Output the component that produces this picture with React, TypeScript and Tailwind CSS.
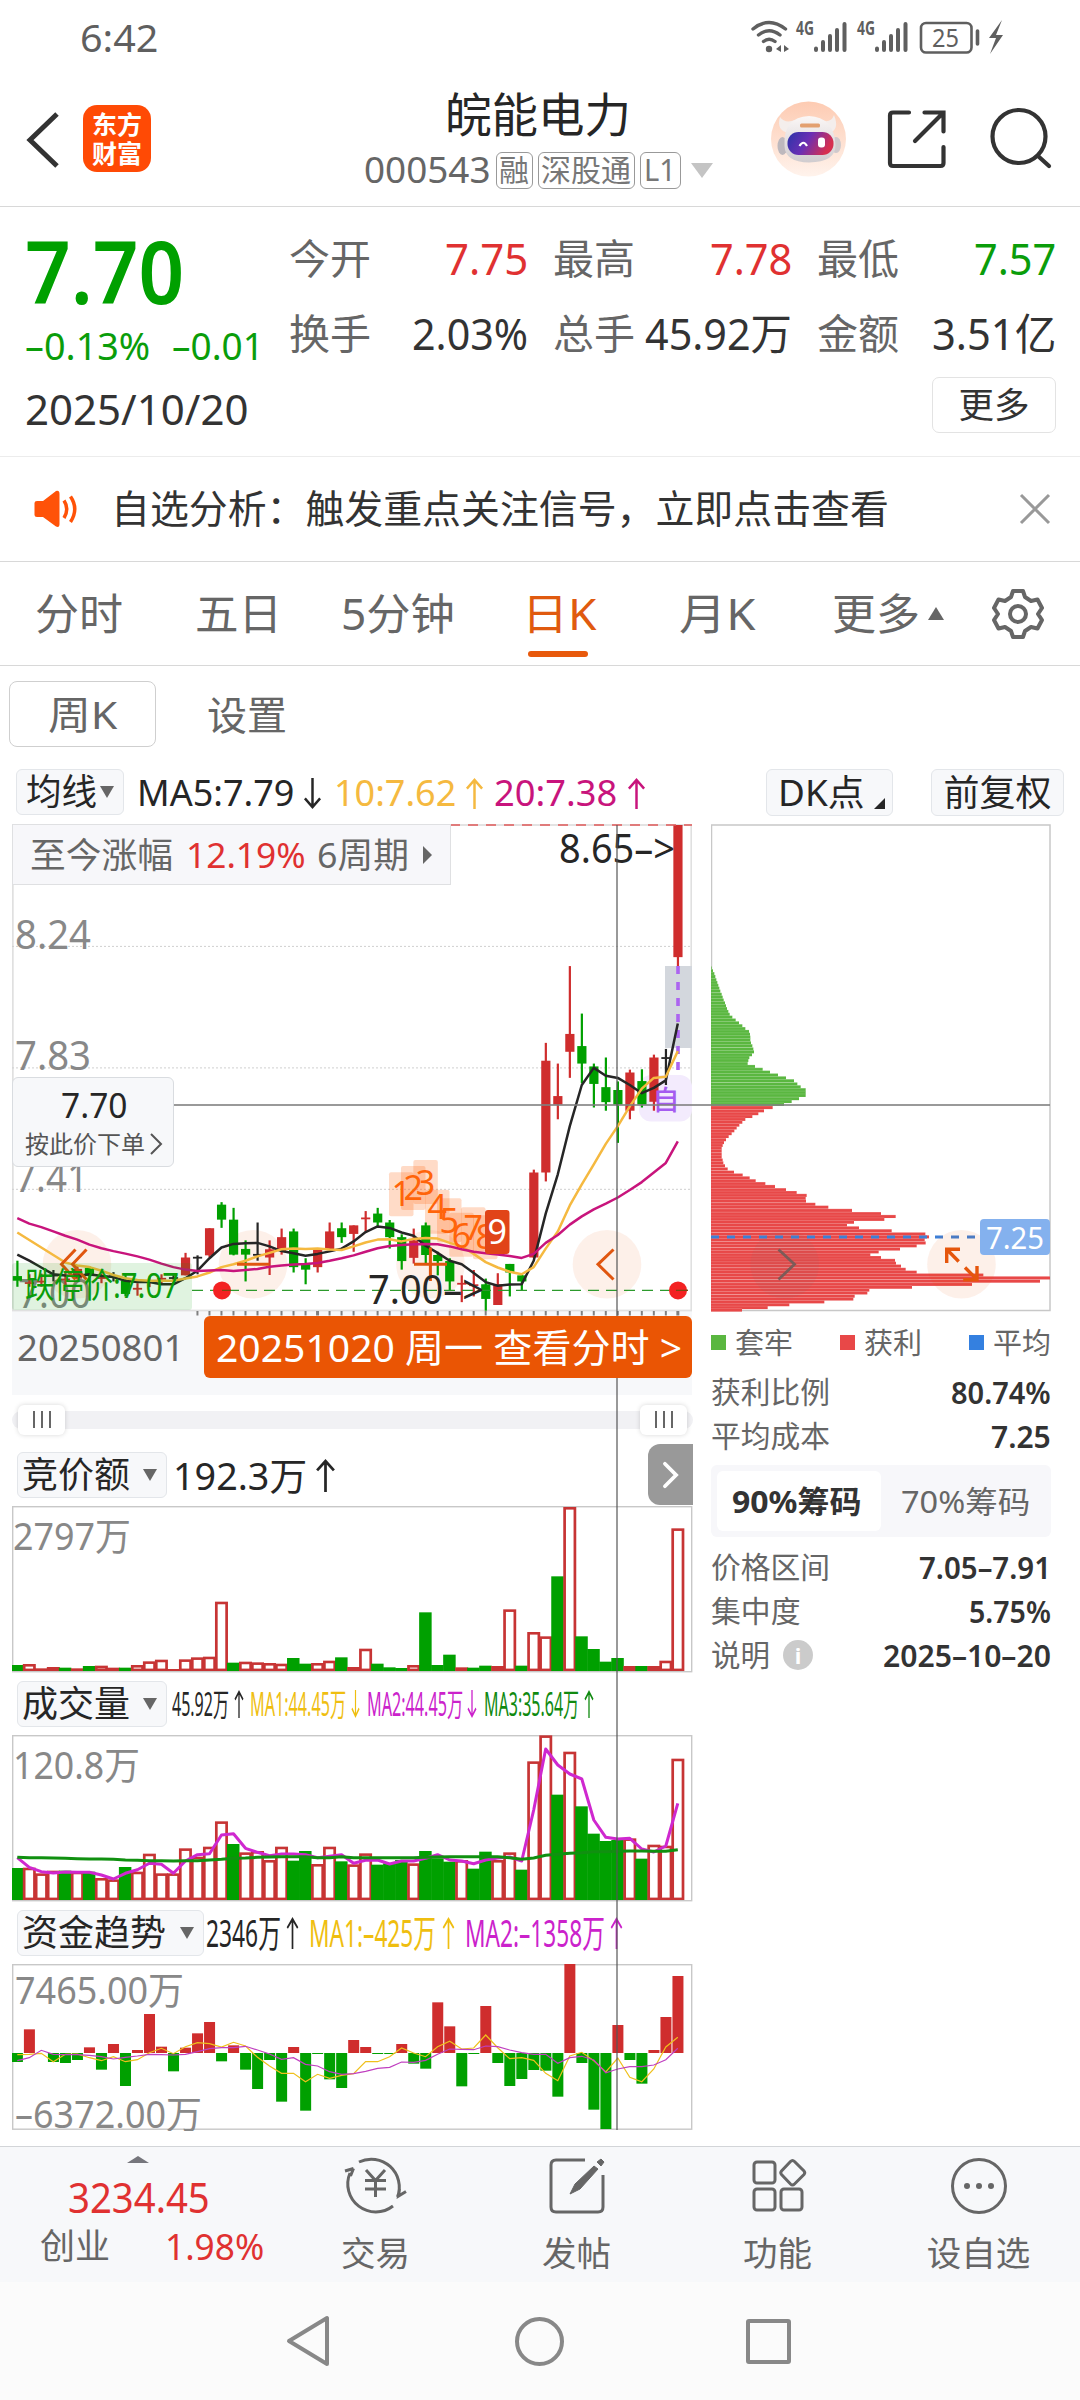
import React, { useLayoutEffect, useRef, useState } from "react";

/* Text squeezed or stretched horizontally to fill its box. */
function Fit({ className = "", children }: { className?: string; children: React.ReactNode }) {
  const outer = useRef<HTMLSpanElement>(null);
  const inner = useRef<HTMLSpanElement>(null);
  const [k, setK] = useState(1);
  useLayoutEffect(() => {
    const fit = () => {
      if (outer.current && inner.current) setK(outer.current.clientWidth / inner.current.offsetWidth);
    };
    fit();
    document.fonts?.ready.then(fit);
  }, []);
  return (
    <span ref={outer} className={"block shrink-0 whitespace-nowrap " + className}>
      <span ref={inner} className="inline-block origin-left" style={{ transform: `scaleX(${k})` }}>
        {children}
      </span>
    </span>
  );
}

function Txt({ x, y, w, s, c, children, weight = 400 }: { x: number; y: number; w: number; s: number; c: string; children: string; weight?: number }) {
  return (
    <text x={x} y={y} fontSize={s} fill={c} fontWeight={weight} textLength={w} lengthAdjust="spacingAndGlyphs">
      {children}
    </text>
  );
}

function Arrow({ down = false, className = "" }: { down?: boolean; className?: string }) {
  return (
    <svg viewBox="0 0 20 32" preserveAspectRatio="none" className={"block shrink-0 " + className} fill="none" stroke="currentColor" strokeWidth="2.6">
      <path d={down ? "M10 0V30M2 21l8 9 8-9" : "M10 32V2M2 11l8-9 8 9"} />
    </svg>
  );
}

const RED = "#cf2d2d";
const GREEN = "#00a000";
const BLACK = "#262626";
const STEP = 12.01;
const cx = (i: number) => 17.3 + i * STEP;

type Candle = [string, number, number, number, number];
/* colour, high, body top, body bottom, low */
const candles: Candle[] = [
  ["g", 1262, 1305, 1318, 1335], ["r", 1300, 1322, 1326, 1335], ["r", 1298, 1318, 1322, 1335], ["k", 1288, 1301, 1305, 1320],
  ["r", 1295, 1312, 1316, 1330], ["r", 1275, 1285, 1312, 1315], ["g", 1278, 1282, 1305, 1310], ["r", 1298, 1308, 1312, 1325],
  ["k", 1294, 1303, 1306, 1320], ["g", 1298, 1318, 1355, 1362], ["r", 1325, 1338, 1342, 1360], ["r", 1306, 1318, 1322, 1336],
  ["r", 1300, 1310, 1313, 1325], ["k", 1298, 1308, 1311, 1325], ["r", 1240, 1253, 1303, 1303], ["k", 1247, 1251, 1255, 1300],
  ["r", 1171, 1171, 1247, 1252], ["g", 1098, 1105, 1147, 1170], ["g", 1114, 1147, 1245, 1247], ["g", 1205, 1229, 1245, 1320],
  ["k", 1155, 1243, 1247, 1262], ["r", 1205, 1230, 1253, 1302], ["r", 1172, 1196, 1235, 1245], ["g", 1172, 1180, 1280, 1295],
  ["g", 1255, 1270, 1287, 1328], ["r", 1230, 1230, 1280, 1295], ["r", 1155, 1180, 1230, 1230], ["g", 1155, 1171, 1196, 1212],
  ["r", 1163, 1163, 1187, 1237], ["r", 1123, 1141, 1144, 1180], ["g", 1114, 1130, 1155, 1165], ["g", 1148, 1155, 1196, 1228],
  ["g", 1188, 1196, 1263, 1287], ["r", 1172, 1205, 1254, 1270], ["g", 1155, 1163, 1246, 1270], ["g", 1237, 1246, 1263, 1303],
  ["g", 1255, 1263, 1320, 1345], ["r", 1303, 1324, 1327, 1378], ["r", 1288, 1328, 1331, 1362], ["g", 1312, 1328, 1369, 1402],
  ["r", 1297, 1328, 1386, 1386], ["g", 1271, 1271, 1295, 1362], ["g", 1300, 1303, 1320, 1345], ["r", 1007, 1015, 1253, 1255],
  ["r", 652, 702, 1015, 1040], ["r", 710, 801, 825, 866], ["r", 437, 627, 677, 750], ["g", 570, 661, 710, 765],
  ["g", 710, 718, 767, 833], ["g", 693, 776, 818, 842], ["g", 760, 784, 825, 932], ["r", 727, 735, 842, 866],
  ["g", 726, 759, 825, 833], ["r", 685, 693, 817, 842], ["k", 669, 692, 696, 770], ["r", 42, 42, 412, 437],
];
const ma5 = [1245, 1262, 1281, 1300, 1303, 1305, 1300, 1305, 1308, 1318, 1322, 1322, 1328, 1328, 1311, 1290, 1255, 1225, 1215, 1213, 1212, 1222, 1235, 1241, 1248, 1243, 1236, 1228, 1208, 1182, 1166, 1170, 1183, 1192, 1220, 1240, 1262, 1272, 1296, 1322, 1332, 1329, 1328, 1262, 1130, 1020, 885, 770, 722, 744, 750, 770, 793, 778, 757, 598];
const ma10 = [1183, 1204, 1225, 1246, 1267, 1275, 1280, 1290, 1302, 1311, 1316, 1318, 1318, 1318, 1312, 1306, 1295, 1280, 1272, 1262, 1250, 1240, 1230, 1228, 1229, 1228, 1231, 1232, 1222, 1211, 1203, 1202, 1208, 1201, 1198, 1200, 1212, 1222, 1243, 1266, 1281, 1293, 1300, 1280, 1228, 1180, 1107, 1048, 992, 935, 885, 830, 780, 750, 747, 675];
const ma20 = [1143, 1158, 1168, 1180, 1192, 1203, 1217, 1227, 1235, 1242, 1250, 1259, 1270, 1280, 1287, 1291, 1289, 1288, 1291, 1288, 1285, 1279, 1275, 1273, 1271, 1268, 1262, 1255, 1247, 1237, 1227, 1221, 1218, 1216, 1215, 1216, 1222, 1230, 1237, 1241, 1245, 1249, 1254, 1243, 1212, 1190, 1161, 1138, 1118, 1102, 1085, 1064, 1042, 1015, 988, 928];
const ky = (v: number) => 810 + v / 2.8;
const path = (a: number[], f: (v: number) => number) => a.map((v, i) => `${cx(i).toFixed(1)},${f(v).toFixed(1)}`).join(" ");

const auction: [string, number][] = [["g", 915], ["r", 912], ["r", 925], ["r", 921], ["g", 923], ["r", 925], ["g", 918], ["r", 917], ["r", 923], ["g", 923], ["r", 915], ["r", 904], ["r", 899], ["r", 927], ["r", 898], ["r", 892], ["r", 890], ["r", 725], ["g", 908], ["r", 905], ["r", 907], ["r", 909], ["r", 911], ["g", 894], ["g", 911], ["r", 909], ["r", 902], ["g", 892], ["r", 921], ["r", 866], ["g", 911], ["g", 922], ["g", 924], ["r", 915], ["g", 757], ["g", 915], ["g", 884], ["r", 922], ["g", 923], ["g", 917], ["r", 918], ["r", 748], ["g", 917], ["r", 816], ["r", 829], ["g", 649], ["r", 441], ["g", 829], ["g", 867], ["g", 905], ["g", 894], ["r", 918], ["g", 918], ["r", 918], ["r", 902], ["r", 505]];
const volume: [string, number][] = [["g", 564], ["r", 563], ["r", 580], ["r", 572], ["g", 572], ["r", 575], ["g", 575], ["r", 594], ["r", 598], ["g", 561], ["r", 575], ["r", 521], ["r", 580], ["r", 580], ["r", 505], ["r", 530], ["r", 500], ["r", 424], ["g", 492], ["r", 517], ["r", 513], ["r", 540], ["r", 500], ["g", 542], ["g", 513], ["r", 552], ["r", 500], ["g", 544], ["r", 553], ["r", 520], ["g", 554], ["g", 550], ["g", 540], ["r", 550], ["g", 513], ["g", 535], ["g", 545], ["r", 540], ["g", 566], ["g", 515], ["r", 540], ["r", 517], ["g", 569], ["r", 244], ["r", 166], ["g", 344], ["r", 215], ["g", 379], ["g", 461], ["g", 483], ["g", 480], ["r", 475], ["g", 536], ["r", 494], ["r", 497], ["r", 236]];
const volMa = [533, 562, 575, 579, 576, 577, 577, 585, 597, 580, 569, 550, 553, 580, 543, 524, 521, 465, 461, 505, 517, 527, 522, 522, 524, 533, 529, 524, 550, 541, 540, 552, 543, 543, 535, 524, 540, 543, 551, 540, 534, 531, 543, 390, 207, 255, 282, 297, 420, 472, 477, 475, 507, 516, 498, 370];
const volMa3 = [532, 533, 533, 534, 535, 536, 537, 537, 538, 540, 541, 542, 542, 543, 542, 542, 540, 538, 535, 534, 532, 531, 530, 530, 530, 533, 533, 530, 533, 533, 533, 533, 533, 533, 532, 531, 530, 530, 530, 530, 530, 533, 538, 534, 526, 523, 520, 518, 515, 515, 514, 513, 513, 514, 514, 509];
const flow = [486, 388, 459, 486, 489, 480, 442, 509, 432, 558, 450, 342, 440, 514, 443, 400, 366, 484, 436, 509, 567, 480, 605, 441, 632, 462, 538, 564, 420, 441, 462, 462, 432, 491, 506, 307, 379, 559, 462, 318, 489, 558, 537, 510, 512, 590, 192, 489, 629, 687, 375, 480, 551, 450, 351, 228];
const flow1 = [464, 463, 460, 485, 463, 462, 473, 482, 470, 485, 479, 458, 445, 461, 440, 428, 431, 441, 427, 438, 472, 498, 520, 520, 545, 523, 535, 526, 521, 485, 485, 470, 444, 459, 470, 440, 424, 447, 444, 405, 443, 476, 473, 481, 520, 542, 468, 457, 482, 516, 474, 532, 545, 507, 441, 412];
const flow2 = [482, 473, 451, 463, 464, 464, 466, 470, 477, 472, 468, 463, 464, 465, 463, 455, 446, 443, 443, 439, 450, 462, 478, 473, 493, 498, 515, 523, 521, 514, 505, 502, 486, 487, 481, 463, 447, 448, 449, 438, 440, 450, 458, 463, 463, 490, 473, 469, 480, 518, 507, 500, 500, 495, 479, 445];

/* Cost distribution: [row, bar end] pairs, one row every 8.2 units. */
const chips = [[442, 35], [450, 39], [458, 43], [466, 46], [475, 49], [483, 52], [491, 55], [499, 58], [507, 61], [516, 65], [524, 68], [532, 71], [540, 75], [548, 78], [556, 81], [564, 85], [572, 89], [580, 97], [588, 107], [596, 117], [604, 127], [612, 136], [620, 147], [628, 150], [636, 151], [644, 151], [652, 153], [660, 157], [669, 160], [677, 162], [685, 156], [693, 148], [701, 145], [710, 143], [718, 165], [726, 188], [734, 210], [742, 234], [750, 258], [758, 282], [767, 292], [775, 302], [783, 317], [791, 317], [799, 317], [808, 297], [816, 275], [824, 252], [833, 218], [842, 192], [850, 175], [858, 157], [866, 136], [874, 127], [882, 118], [890, 110], [898, 103], [906, 95], [914, 86], [923, 78], [931, 72], [939, 68], [947, 65], [955, 65], [964, 65], [972, 65], [980, 68], [988, 70], [996, 75], [1005, 83], [1014, 102], [1022, 128], [1030, 149], [1038, 167], [1046, 196], [1054, 225], [1063, 258], [1071, 290], [1079, 320], [1087, 317], [1095, 318], [1104, 346], [1112, 385], [1121, 456], [1130, 543], [1138, 587], [1146, 553], [1154, 462], [1162, 441], [1170, 477], [1178, 575], [1187, 676], [1195, 687], [1203, 674], [1212, 677], [1220, 650], [1229, 600], [1237, 536], [1245, 511], [1253, 543], [1261, 585], [1269, 588], [1277, 603], [1286, 617], [1294, 650], [1302, 850], [1310, 1050], [1319, 1020], [1328, 816], [1336, 636], [1344, 508], [1352, 502], [1361, 464], [1369, 460], [1377, 373], [1385, 268], [1393, 203], [1400, 126]];

function HollowBars({ data, base, f }: { data: [string, number][]; base: number; f: (v: number) => number }) {
  return (
    <>
      {data.map(([c, v], i) => {
        const y = f(v);
        const x = cx(i) - 6;
        const h = base - y;
        if (c === "g") return <rect key={i} x={x - 0.5} y={y} width={12.5} height={h} fill={GREEN} />;
        return (
          <g key={i}>
            <rect x={x - 0.5} y={y} width={13} height={h} fill="#c73434" />
            {h > 5 && <rect x={x + 2.2} y={y + 2.6} width={7.6} height={h - 5} fill="#fff" />}
          </g>
        );
      })}
    </>
  );
}

const numbers: [string, number, number, number][] = [
  ["1", 117, 1014, 1108], ["2", 153, 997, 1092], ["3", 190, 980, 1077], ["4", 225, 1063, 1145], ["5", 261, 1087, 1185],
  ["6", 298, 1128, 1225], ["7", 333, 1112, 1205], ["8", 369, 1135, 1230],
];

function KChart() {
  return (
    <svg viewBox="12 824 680 492" className="block h-[492px] w-[680px]">
      <defs>
        <clipPath id="kc"><rect x="12" y="824" width="680" height="487" /></clipPath>
      </defs>
      <rect x="12" y="1311" width="680" height="6" fill="#f7f8fa" />
      <rect x="12.8" y="825" width="678.5" height="485.5" fill="#fff" stroke="#e0e0e0" strokeWidth="1.8" />
      {[946.4, 1067.9, 1189.3].map((y) => <path key={y} d={`M12 ${y}H692`} stroke="#cfcfcf" strokeWidth="1" strokeDasharray="2 2" />)}
      <Txt x={15} y={948.5} w={76} s={40} c="#888">8.24</Txt>
      <Txt x={15} y={1070} w={76} s={40} c="#888">7.83</Txt>
      <Txt x={15} y={1191.5} w={73} s={40} c="#888">7.41</Txt>
      <Txt x={18} y={1308} w={73} s={40} c="#888">7.00</Txt>
      <rect x="665" y="966" width="27" height="82" fill="#d3d7dd" />
      <rect x="639" y="1075" width="53" height="46.5" rx="12" fill="#f3ebfd" />
      <g fill="#ff5a00" fillOpacity="0.22">
        {numbers.map(([n, x, t]) => <rect key={n} x={350 + x / 3} y={ky(t)} width="24.5" height="44" rx="2" />)}
      </g>
      <g fill="#eb5500" fillOpacity="0.085">
        {[77, 253, 430.5, 607].map((x) => <circle key={x} cx={x} cy="1264.3" r="34.3" />)}
      </g>
      <g clipPath="url(#kc)">
        {candles.map(([c, hi, t, b, lo], i) => {
          const color = c === "g" ? GREEN : c === "r" ? RED : BLACK;
          return (
            <g key={i} fill={color}>
              <rect x={cx(i) - 1} y={ky(hi)} width={2.2} height={ky(lo) - ky(hi)} />
              <rect x={cx(i) - 4.5} y={ky(t)} width={9.2} height={Math.max(1.8, ky(b) - ky(t))} />
            </g>
          );
        })}
      </g>
      <path d="M678 966V1070" stroke="#ac64f0" strokeWidth="3.6" strokeDasharray="8 8" />
      <g fill="none" strokeWidth="2.5" strokeLinejoin="round">
        <polyline points={path(ma5, ky)} stroke={BLACK} />
        <polyline points={path(ma10, ky)} stroke="#f5b940" />
        <polyline points={path(ma20, ky)} stroke="#c8147c" />
      </g>
      <text x="652.5" y="1110" fontSize="27" fill="#a55cf0" fontWeight="500">自</text>
      {numbers.map(([n, x, , b]) => <text key={n} x={350 + x / 3 + 12.2} y={ky(b)} fontSize="34" fill="#ff640a" textAnchor="middle">{n}</text>)}
      <rect x={485} y={1210} width="24.5" height="44" rx="3" fill="#e14418" />
      <text x="497.3" y="1244" fontSize="34" fill="#fff" textAnchor="middle">9</text>
      <g fill="none" stroke="#e0560f" strokeWidth="3">
        <path d="M75.5 1249.5L61.5 1264.3L75.5 1279.5M86.5 1249.5L72.5 1264.3L86.5 1279.5" />
        <path d="M237 1264.3H269.5M414 1264.3H447M430.4 1247.5V1281" />
        <path d="M613.5 1249.5L598 1264.3L613.5 1279.5" />
      </g>
      <path d="M450 825H692" stroke="#e05a5a" strokeWidth="1.6" strokeDasharray="10 8" />
      <path d="M192 1290.4H688" stroke="#2c9a2c" strokeWidth="1.4" strokeDasharray="11 7" />
      <circle cx="222" cy="1290.4" r="9" fill="#f32222" />
      <circle cx="678" cy="1290.4" r="9" fill="#f32222" />
      <path d="M222 1290.4H231M676 1290.4H688" stroke="#7a4a10" strokeWidth="1.4" />
      <rect x="12" y="1263" width="180" height="47" rx="3" fill="#00a000" fillOpacity="0.12" />
      <Txt x={25} y={1298} w={154} s={35} c="#0a9d0a">跌停价:7.07</Txt>
      <Txt x={559} y={863} w={116} s={40} c={BLACK}>8.65–&gt;</Txt>
      <Txt x={368} y={1303.5} w={116} s={40} c={BLACK}>7.00–&gt;</Txt>
      {candles.map((_, i) => i > 14 && <path key={i} d={`M${cx(i)} 1311V1315.5`} stroke="#808080" strokeWidth={i === 25 || i === 55 ? 3 : 2} />)}
    </svg>
  );
}

function ChipChart() {
  return (
    <svg viewBox="711 824 341 488" className="block h-[488px] w-[341px]">
      <rect x="711.5" y="825" width="338.5" height="485.5" fill="#fff" stroke="#c8c8c8" strokeWidth="1.5" />
      {chips.map(([y, x]) => (
        <g key={y}>
          <rect x="711" y={ky(y) - 1.5} width={(x - 33) / 3} height="3.1" fill={y < 828 ? "#5ab740" : "#e84848"} />
          <rect x="711" y={ky(y) - 1.7} width={(x - 33) / 3} height="0.6" fill="#fff" fillOpacity="0.24" />
        </g>
      ))}
      <path d="M711 1237H975" stroke="#3d7fd6" strokeWidth="3" strokeDasharray="8 8" />
      <circle cx="784.7" cy="1264.3" r="34.3" fill="#777" fillOpacity="0.08" />
      <circle cx="961.5" cy="1264.3" r="34.3" fill="#eb5500" fillOpacity="0.085" />
      <path d="M778.5 1249.5L794.5 1264.3L778.5 1279.5" fill="none" stroke="#7c5b58" strokeWidth="2.8" />
      <path d="M960 1249.2H946.7V1263M946.7 1249.2L958.7 1261.5M965 1267.5L977 1279.5M977 1266V1279.8H963.2" fill="none" stroke="#e5560c" strokeWidth="3.4" />
      <rect x="980" y="1219" width="70" height="36" rx="4" fill="#84b1ee" />
      <Txt x={986} y={1248.5} w={58} s={30} c="#fff">7.25</Txt>
    </svg>
  );
}

function Chip({ label, text, className }: { label: string; text: string; className: string }) {
  return (
    <div className={"flex h-[46px] shrink-0 items-center justify-between rounded-[6px] border-[1.5px] border-[#e3e6ea] bg-[#f7f8fa] pl-[4px] pr-[9px] text-[36px] text-[#262626] " + className}>
      <Fit className={text}>{label}</Fit>
      <span className="h-0 w-0 border-x-[7.5px] border-t-[12px] border-x-transparent border-t-[#666]" />
    </div>
  );
}

function Stat({ label, lw, value, vw }: { label: React.ReactNode; lw: string; value: string; vw: string }) {
  return (
    <div className="flex h-[44px] items-center justify-between">
      <Fit className={"text-[29.5px] text-[#666] " + lw}>{label}</Fit>
      <Fit className={"text-[31px] font-semibold text-[#333] " + vw}>{value}</Fit>
    </div>
  );
}

const quotes = [
  ["今开", "7.75", "w-[83px] text-[#e03131]", "换手", "2.03%", "w-[116px] text-[#333]"],
  ["最高", "7.78", "w-[82px] text-[#e03131]", "总手", "45.92万", "w-[147px] text-[#333]"],
  ["最低", "7.57", "w-[82px] text-[#0a9d0a]", "金额", "3.51亿", "w-[124px] text-[#333]"],
];

export default function App() {
  return (
    <div lang="zh-CN" className="h-[2400px] w-[1080px] overflow-hidden bg-white font-['Noto_Sans','Noto_Sans_CJK_SC',sans-serif] leading-none text-[#333]">
      {/* Status bar */}
      <div className="flex h-[74px] items-center justify-between pl-[80px] pr-[72px] text-[#5f5f5f]">
        <Fit className="w-[78px] text-[38px]">6:42</Fit>
        <svg viewBox="750 14 258 44" className="h-[44px] w-[258px]" fill="none" stroke="#5f5f5f">
          <path d="M753 28Q769 15 785.500 28M758.500 34Q769 25.500 780 34M763.500 40.500Q769 36 775 40.500" strokeWidth="3.4" strokeLinecap="round" />
          <circle cx="769" cy="48" r="3.200" fill="#5f5f5f" stroke="none" />
          <path d="M776 48l5-4v7zM784 44l5 4-5 3z" fill="#5f5f5f" stroke="none" />
          {[0, 61].map((d) => (
            <g key={d}>
              <text x={796 + d} y="34" fontSize="19" fontWeight="700" textLength="18" lengthAdjust="spacingAndGlyphs" fill="#5f5f5f" stroke="none">4G</text>
              <path d={`M${816 + d} 47.500V49M${823 + d} 41V49M${830 + d} 35V49M${837 + d} 29V49M${844.5 + d} 23V49`} strokeWidth="4" strokeLinecap="round" />
            </g>
          ))}
          <rect x="921" y="22" width="50.500" height="29.500" rx="5" strokeWidth="2.600" />
          <text x="932" y="46" fontSize="25" textLength="27" lengthAdjust="spacingAndGlyphs" fill="#5f5f5f" stroke="none">25</text>
          <path d="M977.500 30V43" strokeWidth="3.600" strokeLinecap="round" />
          <path d="M1002 19L989 37h7l-6 16 13-19h-7z" fill="#5f5f5f" stroke="none" />
        </svg>
      </div>

      {/* Title bar */}
      <div className="flex h-[133px] items-center border-b-[1.5px] border-[#d8d8d8] pb-[3px]">
        <svg viewBox="0 0 40 60" className="ml-[24px] h-[60px] w-[40px]" fill="none" stroke="#333" strokeWidth="5"><path d="M33 5L6 31L33 57" /></svg>
        <div className="ml-[19px] flex h-[67px] w-[68px] flex-col items-center justify-center gap-[3px] rounded-[14px] bg-[#ff4a05] text-[25px] font-bold leading-[26px] text-white">
          <span>东方</span><span>财富</span>
        </div>
        <div className="ml-[212px] flex w-[350px] flex-col items-center gap-[13px]">
          <span className="text-[46.5px] leading-[50px] text-[#262626]">皖能电力</span>
          <div className="flex items-center gap-[5px] text-[31px] text-[#777]">
            <Fit className="w-[127px] text-[36px] text-[#666]">000543</Fit>
            <span className="flex h-[37px] w-[37px] items-center justify-center rounded-[6px] border-[1.5px] border-[#999] text-[30px]">融</span>
            <span className="flex h-[37px] w-[97px] items-center justify-center rounded-[6px] border-[1.5px] border-[#999] text-[30px]">深股通</span>
            <span className="flex h-[37px] w-[41px] items-center justify-center rounded-[6px] border-[1.5px] border-[#999] text-[30px]"><Fit className="w-[32px]">L1</Fit></span>
            <span className="ml-[5px] h-0 w-0 border-x-[11px] border-t-[15px] border-x-transparent border-t-[#c4c4c4]" />
          </div>
        </div>
        <svg viewBox="771 101 75 76" className="ml-[58px] h-[76px] w-[75px] shrink-0">
          <defs>
            <linearGradient id="halo" x1="0" y1="0" x2="0" y2="1"><stop offset="0" stopColor="#fdcbb2" /><stop offset="1" stopColor="#fff3ec" /></linearGradient>
            <linearGradient id="visor" x1="0" y1="0" x2="1" y2="0.3"><stop offset="0" stopColor="#2a34a8" /><stop offset="0.5" stopColor="#6a2fb4" /><stop offset="1" stopColor="#d62f50" /></linearGradient>
            <linearGradient id="helmet" x1="0" y1="0" x2="0" y2="1"><stop offset="0" stopColor="#fbf7f6" /><stop offset="1" stopColor="#d0cccf" /></linearGradient>
          </defs>
          <circle cx="808.500" cy="139" r="37.500" fill="url(#halo)" />
          <path d="M780 117Q776 130 788 133L795 120Q785 124 780 117ZM834 115Q840 130 829 133L820 120Q831 124 834 115Z" fill="#f4eeec" />
          <ellipse cx="782.500" cy="146" rx="5" ry="9" fill="#bdb8bd" /><ellipse cx="836" cy="145" rx="5" ry="8" fill="#cfc9cc" />
          <path d="M784.500 146Q783 117 809 116Q834 117 835.500 145Q836 162 809 162.500Q785 162 784.500 146Z" fill="url(#helmet)" />
          <rect x="787.500" y="132" width="46" height="23" rx="11" fill="url(#visor)" />
          <rect x="800" y="123.500" width="20" height="4" rx="1.500" fill="#e3a070" />
          <path d="M799.500 146Q803.500 139.500 807 146" fill="none" stroke="#fff" strokeWidth="2.200" /><rect x="818" y="137.500" width="7" height="10" rx="3" fill="#fff" />
        </svg>
        <svg viewBox="886 108 62 62" className="ml-[40px] h-[62px] w-[62px] shrink-0" fill="none" stroke="#333" strokeWidth="4.200" strokeLinecap="round">
          <path d="M909 112.500H893Q890 112.500 890 115.500V163Q890 166 893 166H940.500Q943.500 166 943.500 163V147M924.500 112.500H943.500V131.500M942 114L915 141" />
        </svg>
        <svg viewBox="988 106 66 66" className="ml-[40px] h-[66px] w-[66px] shrink-0" fill="none" stroke="#333" strokeWidth="4.200" strokeLinecap="round">
          <circle cx="1019" cy="136.500" r="26.500" /><path d="M1038 156L1049 166" />
        </svg>
      </div>

      {/* Quote */}
      <div className="flex h-[250px] border-b-[1.5px] border-[#ececec]">
        <div className="w-[289px] shrink-0 pl-[25px]">
          <Fit className="mt-[18px] h-[90px] w-[159px] text-[87px] font-semibold leading-[90px] text-[#00a000]">7.70</Fit>
          <div className="mt-[7px] flex h-[44px] items-center gap-[22px] text-[39px] text-[#0a9d0a]">
            <Fit className="w-[125px]">–0.13%</Fit>
            <Fit className="w-[92px]">–0.01</Fit>
          </div>
          <Fit className="mt-[22px] w-[223px] text-[42px] text-[#333]">2025/10/20</Fit>
        </div>
        <div className="w-[791px] shrink-0">
          <div className="grid grid-cols-[264px_264px_264px] pt-[26px]">
            {quotes.map(([a, b, bc, c, d, dc]) => (
              <div key={a} className="w-[239px] text-[43px]">
                <div className="flex h-[50px] items-center justify-between"><Fit className="w-[82px] text-[41px] text-[#666]">{a}</Fit><Fit className={bc}>{b}</Fit></div>
                <div className="mt-[25px] flex h-[50px] items-center justify-between"><Fit className="w-[82px] text-[41px] text-[#666]">{c}</Fit><Fit className={dc}>{d}</Fit></div>
              </div>
            ))}
          </div>
          <div className="ml-[643px] mt-[19px] flex h-[56px] w-[124px] items-center justify-center rounded-[7px] border-[1.5px] border-[#e3e3e3] text-[35.5px] text-[#333]">更多</div>
        </div>
      </div>

      {/* Notice */}
      <div className="flex h-[105px] items-center border-b-[1.5px] border-[#d8d8d8]">
        <svg viewBox="34 488 46 40" className="ml-[34px] h-[40px] w-[46px]" fill="none" stroke="#ff5208" strokeWidth="3.500">
          <path d="M34.500 502Q34.500 500 37 500H43L56 490Q59.500 489 59.500 493V523Q59.500 527 56 525.500L43 516H37Q34.500 516 34.500 514Z" fill="#ff5208" stroke="none" />
          <path d="M64 499.500Q69.500 508 64 517M70.500 495.500Q79 508 70.500 521" />
        </svg>
        <span className="ml-[31px] whitespace-nowrap pb-[2px] text-[38.9px] leading-none text-[#333]">自选分析：触发重点关注信号，立即点击查看</span>
        <svg viewBox="0 0 32 32" className="ml-auto mr-[29px] h-[32px] w-[32px]" fill="none" stroke="#999" strokeWidth="3"><path d="M2 2L30 30M30 2L2 30" /></svg>
      </div>

      {/* Period tabs */}
      <div className="flex h-[104px] items-center border-b-[1.5px] border-[#d8d8d8] text-[43.5px] text-[#666]">
        <Fit className="ml-[35px] w-[88px]">分时</Fit>
        <Fit className="ml-[72px] w-[87px]">五日</Fit>
        <Fit className="ml-[59px] w-[114px]">5分钟</Fit>
        <div className="relative ml-[67px] text-[#e05a0f]">
          <Fit className="w-[74px]">日K</Fit>
          <span className="absolute left-[6px] top-[59px] h-[6px] w-[60px] rounded-full bg-[#e8590c]" />
        </div>
        <Fit className="ml-[83px] w-[76px]">月K</Fit>
        <Fit className="ml-[77px] w-[88px]">更多</Fit>
        <span className="ml-[8px] h-0 w-0 border-x-[8px] border-b-[13px] border-x-transparent border-b-[#666]" />
        <svg viewBox="0 0 52 52" className="ml-[48px] h-[52px] w-[52px]" fill="none" stroke="#666" strokeWidth="4" strokeLinejoin="round">
          <path d="M21 3H31L33 9L39 13L45.500 11.500L50 20L46 26L50 32L45.500 40.500L39 39L33 43L31 49H21L19 43L13 39L6.500 40.500L2 32L6 26L2 20L6.500 11.500L13 13L19 9Z" />
          <circle cx="26" cy="26" r="8" />
        </svg>
      </div>

      {/* Sub tabs */}
      <div className="flex h-[103px] items-start pt-[15px] text-[38.5px] text-[#666]">
        <div className="ml-[9px] flex h-[66px] w-[147px] items-center justify-center rounded-[8px] border-[1.5px] border-[#cfcfcf]"><Fit className="w-[69px]">周K</Fit></div>
        <div className="ml-[51px] flex h-[67px] items-center text-[40px]">设置</div>
      </div>

      {/* Moving averages */}
      <div className="flex h-[55px] items-start text-[36px]">
        <div className="ml-[16px] flex h-[46px] w-[108px] items-center rounded-[6px] border-[1.5px] border-[#e3e6ea] bg-[#f7f8fa] pl-[9px] text-[#262626]">
          <Fit className="w-[71px]">均线</Fit>
          <span className="ml-[3px] h-0 w-0 border-x-[7.5px] border-t-[12px] border-x-transparent border-t-[#666]" />
        </div>
        <div className="flex h-[48px] w-[642px] items-center pl-[13px] text-[#262626]">
          <Fit className="w-[157px]">MA5:7.79</Fit><Arrow down className="ml-[9px] h-[31px] w-[19px]" />
          <Fit className="ml-[12px] w-[122px] text-[#f5b940]">10:7.62</Fit><Arrow className="ml-[9px] h-[31px] w-[19px] text-[#f5b940]" />
          <Fit className="ml-[10px] w-[123px] text-[#c8147c]">20:7.38</Fit><Arrow className="ml-[10px] h-[31px] w-[19px] text-[#c8147c]" />
        </div>
        <div className="flex h-[47px] w-[127px] items-center rounded-[6px] border-[1.5px] border-[#e3e6ea] bg-[#f7f8fa] pl-[11px] text-[#262626]">
          <Fit className="w-[87px]">DK点</Fit>
          <span className="ml-[9px] mt-[22px] h-0 w-0 border-b-[11px] border-l-[11px] border-b-[#262626] border-l-transparent" />
        </div>
        <div className="ml-[38px] flex h-[47px] w-[133px] items-center justify-center rounded-[6px] border-[1.5px] border-[#e3e6ea] bg-[#f7f8fa] text-[#262626]"><Fit className="w-[108px]">前复权</Fit></div>
      </div>

      {/* Charts */}
      <div className="relative flex h-[1322px] pl-[12px]">
        <div className="w-[699px] shrink-0">
          <div className="relative h-[492px] w-[680px]">
            <KChart />
            <div className="absolute left-0 top-0 flex h-[61px] w-[439px] items-center border-[1.5px] border-[#dfe0e2] bg-[#f7f7fa] pl-[17px] text-[35px] text-[#666]">
              <Fit className="w-[143px]">至今涨幅</Fit>
              <Fit className="ml-[13px] w-[120px] text-[#e03131]">12.19%</Fit>
              <Fit className="ml-[11px] w-[92px]">6周期</Fit>
              <span className="ml-[14px] h-0 w-0 border-y-[9px] border-l-[9px] border-y-transparent border-l-[#666]" />
            </div>
            <div className="absolute left-0 top-[253px] z-10 h-[90px] w-[162px] rounded-[6px] border-[1.5px] border-[#d9dce0] bg-[#f7f8fa]">
              <Fit className="ml-[48px] mt-[10px] w-[66px] text-[34px] text-[#262626]">7.70</Fit>
              <div className="mt-[10px] flex items-center pl-[12px] text-[24px] text-[#555]">
                <Fit className="w-[120px]">按此价下单</Fit>
                <svg viewBox="0 0 14 22" className="ml-[4px] h-[22px] w-[14px]" fill="none" stroke="#555" strokeWidth="2"><path d="M2 1L12 11L2 21" /></svg>
              </div>
            </div>
          </div>
          <div className="flex h-[79px] w-[680px] justify-between bg-[#f7f8fa]">
            <Fit className="ml-[5px] mt-[12px] w-[167px] text-[37px] text-[#666]">20250801</Fit>
            <div className="relative z-10 flex h-[62px] w-[488px] items-center rounded-[6px] bg-[#ea5504] pb-[1px] pl-[12px] text-[39px] text-white">
              <Fit className="w-[466px]">20251020 周一 查看分时 &gt;</Fit>
            </div>
          </div>
          <div className="flex h-[49px] w-[681px] items-center">
            <div className="flex h-[18px] w-[681px] items-center justify-between rounded-full bg-[#f1f1f4] px-[6px]">
              {[0, 1].map((i) => (
                <div key={i} className="flex h-[30px] w-[47px] items-center justify-center gap-[6px] rounded-[6px] bg-white shadow-[0_0_5px_rgba(0,0,0,0.16)]">
                  {[0, 1, 2].map((k) => <span key={k} className="h-[17px] w-[2px] bg-[#666]" />)}
                </div>
              ))}
            </div>
          </div>
          <div className="flex h-[62px] w-[681px] items-center">
            <Chip label="竞价额" text="w-[108px]" className="ml-[5px] w-[150px]" />
            <Fit className="ml-[6px] w-[134px] pb-[1px] text-[38px] text-[#262626]">192.3万</Fit>
            <Arrow className="ml-[8px] h-[33px] w-[21px] text-[#262626]" />
            <div className="relative z-10 mb-[1px] ml-auto flex h-[61px] w-[45px] items-center justify-center rounded-l-[12px] bg-[#999]">
              <svg viewBox="0 0 18 30" className="h-[28px] w-[17px]" fill="none" stroke="#fff" strokeWidth="4" strokeLinecap="round"><path d="M3 3L15 15L3 27" /></svg>
            </div>
          </div>
          <svg viewBox="12 1506 681 167" className="block h-[167px] w-[681px]">
            <rect x="12.700" y="1506.700" width="679" height="165" fill="#fff" stroke="#c8c8c8" strokeWidth="1.400" />
            <Txt x={13} y={1550} w={118} s={38} c="#888">2797万</Txt>
            <HollowBars data={auction} base={1671} f={(v) => 1360 + v / 3} />
          </svg>
          <div className="flex h-[62px] w-[681px] items-center text-[32px]">
            <Chip label="成交量" text="w-[108px]" className="ml-[5px] w-[150px]" />
            <Fit className="ml-[5px] w-[57px] text-[#262626]">45.92万</Fit><Arrow className="ml-[5px] h-[28px] w-[10px] text-[#262626]" />
            <Fit className="ml-[6px] w-[96px] text-[#efbe10]">MA1:44.45万</Fit><Arrow down className="ml-[5px] h-[28px] w-[9px] text-[#efbe10]" />
            <Fit className="ml-[7px] w-[96px] text-[#cb22cb]">MA2:44.45万</Fit><Arrow down className="ml-[4px] h-[28px] w-[10px] text-[#cb22cb]" />
            <Fit className="ml-[7px] w-[95px] text-[#108a10]">MA3:35.64万</Fit><Arrow className="ml-[5px] h-[28px] w-[10px] text-[#108a10]" />
          </div>
          <svg viewBox="12 1735 681 167" className="block h-[167px] w-[681px]">
            <rect x="12.700" y="1735.700" width="679" height="165" fill="#fff" stroke="#c8c8c8" strokeWidth="1.400" />
            <Txt x={13} y={1779} w={127} s={38} c="#888">120.8万</Txt>
            <HollowBars data={volume} base={1900} f={(v) => 1680 + v / 3} />
            <polyline points={path(volMa, (v) => 1680 + v / 3)} fill="none" stroke="#cf28cf" strokeWidth="3" strokeLinejoin="round" />
            <polyline points={path(volMa3, (v) => 1680 + v / 3)} fill="none" stroke="#109010" strokeWidth="3" />
          </svg>
          <div className="flex h-[62px] w-[681px] items-center text-[38px]">
            <Chip label="资金趋势" text="w-[144px]" className="ml-[5px] w-[187px]" />
            <Fit className="ml-[2px] w-[75px] pb-[2px] text-[#262626]">2346万</Fit><Arrow className="ml-[5px] h-[32px] w-[13px] text-[#262626]" />
            <Fit className="ml-[10px] w-[127px] pb-[2px] text-[#efbe10]">MA1:–425万</Fit><Arrow className="ml-[6px] h-[32px] w-[13px] text-[#efbe10]" />
            <Fit className="ml-[10px] w-[140px] pb-[2px] text-[#cb22cb]">MA2:–1358万</Fit><Arrow className="ml-[5px] h-[32px] w-[13px] text-[#cb22cb]" />
          </div>
          <svg viewBox="12 1964 681 167" className="block h-[167px] w-[681px]">
            <rect x="12.700" y="1964.700" width="679" height="164.500" fill="#fff" stroke="#c8c8c8" strokeWidth="1.400" />
            <Txt x={15} y={2004} w={169} s={38} c="#888">7465.00万</Txt>
            <Txt x={15} y={2128} w={187} s={38} c="#888">–6372.00万</Txt>
            {flow.map((v, i) => v !== 459 && (
              <rect key={i} x={cx(i) - 5.4} y={1900 + Math.min(v, 459) / 3} width="11" height={Math.abs(v - 459) / 3} fill={v < 459 ? RED : GREEN} />
            ))}
            <polyline points={path(flow1, (v) => 1900 + v / 3)} fill="none" stroke="#efc01c" strokeWidth="1.200" />
            <polyline points={path(flow2, (v) => 1900 + v / 3)} fill="none" stroke="#c040c0" strokeWidth="1.200" />
          </svg>
        </div>

        {/* Cost distribution panel */}
        <div className="w-[340px] shrink-0">
          <ChipChart />
          <div className="flex h-[58px] items-center justify-between pt-[2px] text-[29px] text-[#666]">
            <span className="flex items-center gap-[9px]"><i className="h-[15px] w-[15px] bg-[#5ab740]" />套牢</span>
            <span className="flex items-center gap-[9px]"><i className="h-[15px] w-[15px] bg-[#e84848]" />获利</span>
            <span className="flex items-center gap-[9px]"><i className="h-[15px] w-[15px] bg-[#3480e0]" />平均</span>
          </div>
          <Stat label="获利比例" lw="w-[119px]" value="80.74%" vw="w-[100px]" />
          <Stat label="平均成本" lw="w-[119px]" value="7.25" vw="w-[60px]" />
          <div className="mb-[8px] mt-[7px] flex h-[72px] items-center rounded-[6px] bg-[#f7f7fa] px-[6px] text-[31px]">
            <div className="flex h-[60px] w-[164px] items-center justify-center rounded-[6px] bg-white pr-[6px] text-[#333]"><Fit className="w-[129px] font-bold">90%筹码</Fit></div>
            <div className="flex h-[60px] flex-1 items-center justify-center pl-[4px] text-[#666]"><Fit className="w-[129px]">70%筹码</Fit></div>
          </div>
          <Stat label="价格区间" lw="w-[119px]" value="7.05–7.91" vw="w-[132px]" />
          <Stat label="集中度" lw="w-[90px]" value="5.75%" vw="w-[82px]" />
          <div className="flex h-[44px] items-center">
            <Fit className="w-[59px] text-[29.5px] text-[#666]">说明</Fit>
            <span className="ml-[13px] flex h-[30px] w-[30px] items-center justify-center rounded-full bg-[#cbcbcb] text-[22px] font-bold text-white">i</span>
            <Fit className="ml-auto w-[168px] text-[31px] font-semibold text-[#333]">2025–10–20</Fit>
          </div>
        </div>

        {/* Crosshair */}
        <span className="absolute left-[12px] top-[280px] h-[1.5px] w-[1038px] bg-[#808080]/80" />
        <span className="absolute left-[616px] top-[1px] h-[1305px] w-[1.5px] bg-[#555]/60" />
      </div>

      {/* Bottom bar */}
      <div className="flex h-[136px] border-t-[1.5px] border-[#d3d5d8] bg-[#f7f8fa] text-[#666]">
        <div className="w-[275px]">
          <div className="ml-[127px] mt-[9px] h-0 w-0 border-x-[11px] border-b-[7px] border-x-transparent border-b-[#76767c]" />
          <Fit className="ml-[68px] mt-[14px] w-[142px] text-[41px] text-[#e03131]">3234.45</Fit>
          <div className="mt-[9px] flex items-center">
            <span className="ml-[40px] text-[35px]">创业</span>
            <Fit className="ml-[55px] w-[99px] text-[37px] text-[#e03131]">1.98%</Fit>
          </div>
        </div>
        {[
          ["交易", <g key="a"><path d="M18 9A28 28 0 0 1 56.500 44M52 53A28 28 0 0 1 9 20M4 18L12.500 15.500M9.500 23L12.500 15.500M65 38.500L57.500 43L58.500 36" /><path d="M25 17L34.500 27.500L44 17M34.500 27.500V44M24 27.500H45M24 36H45" /></g>],
          ["发帖", <g key="b"><path d="M43 7H14Q9 7 9 12V54Q9 59 14 59H56Q61 59 61 54V22" /><path d="M28 41L33 31L52 13L56 16L38 36Z" fill="#666" strokeWidth="1" /><path d="M55 9L59 6L62 9L59 13Z" fill="#666" strokeWidth="1" /></g>],
          ["功能", <g key="c"><rect x="11" y="9" width="21" height="21" rx="3" /><rect x="11" y="36" width="21" height="21" rx="3" /><rect x="38" y="36" width="21" height="21" rx="3" /><path d="M47.500 8.500Q49.500 6.500 51.500 8.500L61 18Q62.500 19.800 61 21.500L51.500 31Q49.500 33 47.500 31L38.500 21.500Q37 19.800 38.500 18Z" /></g>],
          ["设自选", <g key="d"><circle cx="35" cy="33" r="26.500" /><g fill="#666" stroke="none"><circle cx="23" cy="33" r="3" /><circle cx="35" cy="33" r="3" /><circle cx="47" cy="33" r="3" /></g></g>],
        ].map(([label, icon]) => (
          <div key={label as string} className="flex w-[201px] flex-col items-center text-[34.5px]">
            <svg viewBox="0 0 70 66" className="mt-[6px] h-[66px] w-[70px]" fill="none" stroke="#666" strokeWidth="3">{icon}</svg>
            <span className="mt-[17px]">{label}</span>
          </div>
        ))}
      </div>

      {/* System navigation */}
      <div className="flex h-[118px] items-center bg-[#fbfbfb]">
        <svg viewBox="0 0 46 54" className="ml-[285px] h-[54px] w-[46px]" fill="none" stroke="#888" strokeWidth="4" strokeLinejoin="round"><path d="M42 4V50L4 27Z" /></svg>
        <span className="ml-[184px] h-[49px] w-[49px] rounded-full border-[4px] border-[#888]" />
        <span className="ml-[182px] h-[45px] w-[45px] rounded-[3px] border-[4px] border-[#888]" />
      </div>
    </div>
  );
}
